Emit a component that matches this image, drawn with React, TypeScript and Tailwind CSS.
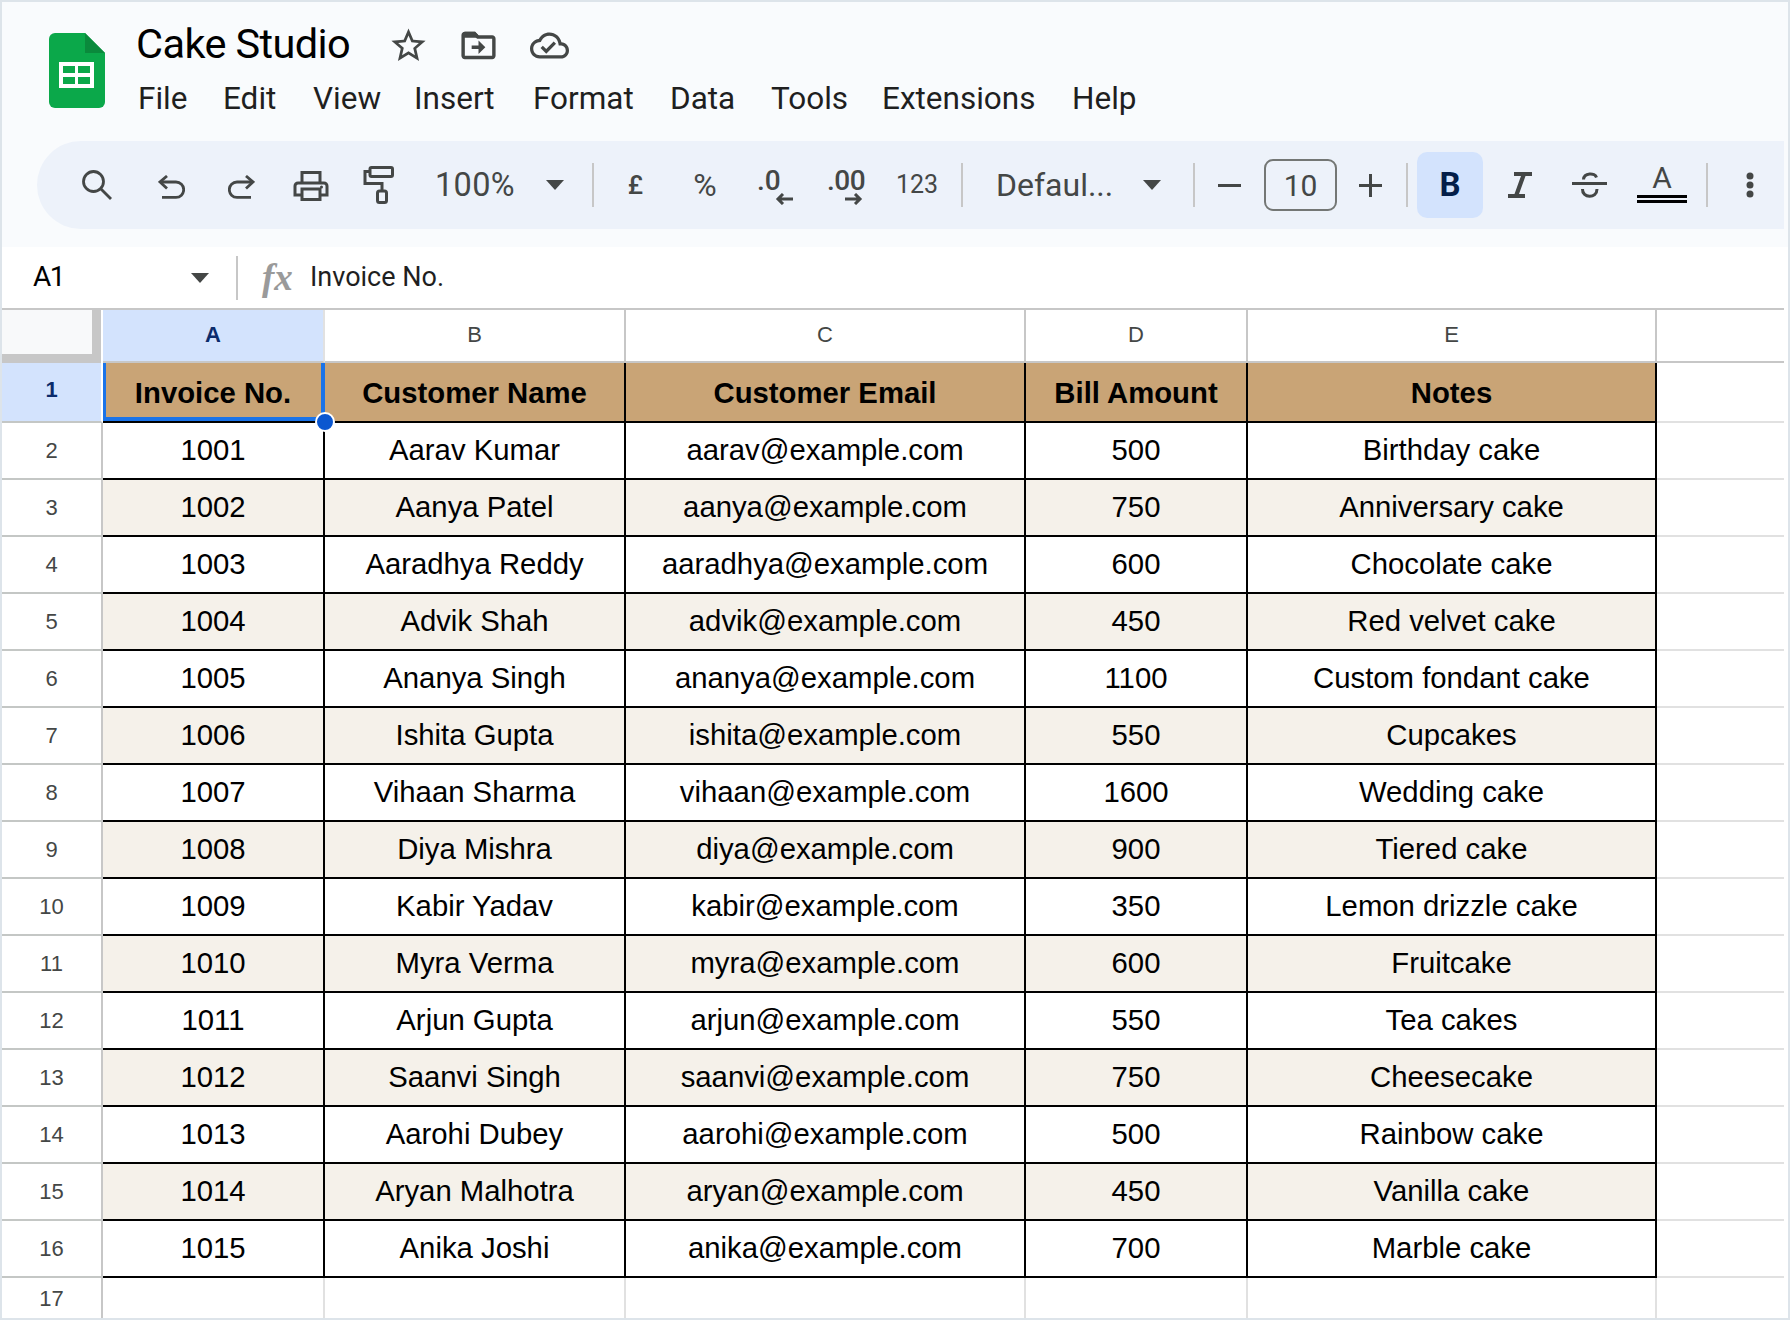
import type { ReactNode } from "react";

const rows = [
  ["1001", "Aarav Kumar", "aarav@example.com", "500", "Birthday cake"],
  ["1002", "Aanya Patel", "aanya@example.com", "750", "Anniversary cake"],
  ["1003", "Aaradhya Reddy", "aaradhya@example.com", "600", "Chocolate cake"],
  ["1004", "Advik Shah", "advik@example.com", "450", "Red velvet cake"],
  ["1005", "Ananya Singh", "ananya@example.com", "1100", "Custom fondant cake"],
  ["1006", "Ishita Gupta", "ishita@example.com", "550", "Cupcakes"],
  ["1007", "Vihaan Sharma", "vihaan@example.com", "1600", "Wedding cake"],
  ["1008", "Diya Mishra", "diya@example.com", "900", "Tiered cake"],
  ["1009", "Kabir Yadav", "kabir@example.com", "350", "Lemon drizzle cake"],
  ["1010", "Myra Verma", "myra@example.com", "600", "Fruitcake"],
  ["1011", "Arjun Gupta", "arjun@example.com", "550", "Tea cakes"],
  ["1012", "Saanvi Singh", "saanvi@example.com", "750", "Cheesecake"],
  ["1013", "Aarohi Dubey", "aarohi@example.com", "500", "Rainbow cake"],
  ["1014", "Aryan Malhotra", "aryan@example.com", "450", "Vanilla cake"],
  ["1015", "Anika Joshi", "anika@example.com", "700", "Marble cake"],
];

const gridCols = "grid grid-cols-[101px_222px_301px_400px_222px_409px_127px]";

function Sep({ className = "" }: { className?: string }) {
  return <div className={`w-[2px] h-[44px] shrink-0 bg-[#c7c7c7] ${className}`} />;
}

function Slot({ className, children }: { className: string; children: ReactNode }) {
  return <div className={`flex items-center justify-center shrink-0 ${className}`}>{children}</div>;
}

function Caret() {
  return (
    <svg width="18" height="10" viewBox="0 0 18 10" className="shrink-0">
      <path d="M0 0h18L9 10z" fill="#444746" />
    </svg>
  );
}

function SmallArrow({ left }: { left?: boolean }) {
  return (
    <svg width="18" height="12" viewBox="0 0 18 12" fill="none" stroke="#444746" strokeWidth="3">
      {left ? <path d="M18 6H3M8 1L3 6l5 5" /> : <path d="M0 6h15M10 1l5 5-5 5" />}
    </svg>
  );
}

function Logo() {
  return (
    <svg width="56" height="75" viewBox="0 0 56 75" className="shrink-0">
      <path d="M6 0h30l20 20v49a6 6 0 0 1-6 6H6a6 6 0 0 1-6-6V6a6 6 0 0 1 6-6z" fill="#0ba84a" />
      <path d="M36 0l20 20H36z" fill="#0a8a3c" />
      <rect x="10" y="29" width="35" height="26" fill="#fff" />
      <rect x="14" y="33" width="12" height="7" fill="#0ba84a" />
      <rect x="29" y="33" width="12" height="7" fill="#0ba84a" />
      <rect x="14" y="44" width="12" height="7" fill="#0ba84a" />
      <rect x="29" y="44" width="12" height="7" fill="#0ba84a" />
    </svg>
  );
}

function HeaderBar() {
  const menu: [string, string][] = [
    ["File", "w-[85px]"],
    ["Edit", "w-[90px]"],
    ["View", "w-[101px]"],
    ["Insert", "w-[119px]"],
    ["Format", "w-[137px]"],
    ["Data", "w-[101px]"],
    ["Tools", "w-[111px]"],
    ["Extensions", "w-[190px]"],
    ["Help", "w-[80px]"],
  ];
  return (
    <div className="flex pl-[47px] pt-[31px] h-[139px] shrink-0">
      <Logo />
      <div className="flex flex-col ml-[32px] mt-[-14px]">
        <div className="flex items-center h-[50px]">
          <span className="text-[41.5px] leading-[50px] text-black w-[248px] ml-[-1px] tracking-[-0.6px]">Cake Studio</span>
          <svg width="41" height="41" viewBox="0 0 24 24" fill="#444746" className="shrink-0 ml-[4px] mt-[2px]">
            <path d="M22 9.24l-7.19-.62L12 2 9.19 8.63 2 9.24l5.46 4.73L5.82 21 12 17.27 18.18 21l-1.63-7.03L22 9.24zM12 15.4l-3.76 2.27 1-4.28-3.32-2.88 4.38-.38L12 6.1l1.71 4.04 4.38.38-3.32 2.88 1 4.28L12 15.4z" />
          </svg>
          <svg width="41" height="41" viewBox="0 0 24 24" fill="#444746" className="shrink-0 ml-[29px] mt-[2px]">
            <path d="M20 6h-8l-2-2H4c-1.1 0-1.99.9-1.99 2L2 18c0 1.1.9 2 2 2h16c1.1 0 2-.9 2-2V8c0-1.1-.9-2-2-2zm0 12H4V6h5.17l2 2H20v10zm-8-4H8v-2h4v-3l4 4-4 4v-3z" />
            <path d="M4 4h6l2 2v1.500H2.500V6A2 2 0 0 1 4 4z" />
          </svg>
          <svg width="39" height="39" viewBox="0 0 24 24" fill="#444746" className="shrink-0 ml-[31px] mt-[2px]">
            <path d="M19.35 10.04C18.67 6.59 15.64 4 12 4 9.11 4 6.6 5.64 5.35 8.04 2.34 8.36 0 10.91 0 14c0 3.31 2.69 6 6 6h13c2.76 0 5-2.24 5-5 0-2.64-2.05-4.78-4.65-4.96zM19 18H6c-2.21 0-4-1.79-4-4 0-2.05 1.53-3.76 3.56-3.97l1.07-.11.5-.95C8.08 7.14 9.94 6 12 6c2.62 0 4.88 1.86 5.39 4.43l.3 1.5 1.53.11c1.56.1 2.78 1.41 2.78 2.96 0 1.65-1.35 3-3 3zm-9-3.82l-2.09-2.09L6.5 13.5 10 17l6.01-6.01-1.41-1.41z" />
          </svg>
        </div>
        <div className="flex mt-[10px] ml-[1px] text-[31.5px] leading-[40px] text-[#1f1f1f]">
          {menu.map(([label, w]) => (
            <span key={label} className={w}>
              {label}
            </span>
          ))}
        </div>
      </div>
    </div>
  );
}

function Toolbar() {
  return (
    <div className="flex items-center ml-[35px] mr-[4px] h-[88px] shrink-0 pl-[25px] bg-[#edf2fa] rounded-l-[44px] text-[#444746]">
      <Slot className="w-[70px]">
        <svg width="30" height="30" viewBox="0 0 30 30" fill="none" stroke="#444746" strokeWidth="2.8">
          <circle cx="11.500" cy="11.500" r="10" />
          <path d="M18.500 18.500L29 29" />
        </svg>
      </Slot>
      <Slot className="w-[79px] pt-[4px]">
        <svg width="27" height="24" viewBox="0 0 27 24" fill="none" stroke="#444746" strokeWidth="2.8">
          <path d="M9 1L2 7l7 6.500" />
          <path d="M2 7h16a7.700 7.700 0 0 1 0 15.400H4" />
        </svg>
      </Slot>
      <Slot className="w-[60px] pt-[4px]">
        <svg width="27" height="24" viewBox="0 0 27 24" fill="none" stroke="#444746" strokeWidth="2.8">
          <path d="M18 1l7 6-7 6.500" />
          <path d="M25 7H9a7.700 7.700 0 0 0 0 15.400h14" />
        </svg>
      </Slot>
      <Slot className="w-[80px] pt-[2px]">
        <svg width="36" height="30" viewBox="0 0 36 30" fill="none" stroke="#444746" strokeWidth="3">
          <path d="M9 11.500V1.500h18v10" />
          <path d="M9 24H2V15a3 3 0 0 1 3-3h26a3 3 0 0 1 3 3v9h-7" />
          <rect x="9" y="18" width="18" height="10.500" />
          <circle cx="28.500" cy="16" r="1.500" fill="#444746" stroke="none" />
        </svg>
      </Slot>
      <Slot className="w-[55px]">
        <svg width="31" height="38" viewBox="0 0 31 38" fill="none" stroke="#444746" strokeWidth="3">
          <rect x="7" y="1.500" width="22.500" height="9" rx="1.500" />
          <path d="M7 5.500H2V17.500H19V25" />
          <rect x="14.500" y="25" width="9" height="11.500" rx="2" />
        </svg>
      </Slot>
      <div className="w-[140px] pl-[29px] shrink-0 text-[32.5px] leading-none tracking-[0.3px]">100%</div>
      <Caret />
      <Sep className="ml-[28px]" />
      <Slot className="w-[83px] text-[26px] font-medium">£</Slot>
      <Slot className="w-[56px] text-[32px] leading-none">%</Slot>
      <Slot className="w-[84px]">
        <div className="flex flex-col w-[36px]">
          <span className="self-start text-[28px] leading-[27px] pt-[2px] font-medium">.0</span>
          <div className="self-end mt-[-1px]">
            <SmallArrow left />
          </div>
        </div>
      </Slot>
      <Slot className="w-[56px]">
        <div className="flex flex-col w-[36px]">
          <span className="self-start text-[28px] leading-[27px] pt-[2px] font-medium tracking-[-0.5px]">.00</span>
          <div className="self-end mt-[-1px]">
            <SmallArrow />
          </div>
        </div>
      </Slot>
      <Slot className="w-[88px] text-[25px]">123</Slot>
      <Sep />
      <div className="w-[180px] pl-[33px] shrink-0 text-[32px] leading-none">Defaul...</div>
      <Caret />
      <Sep className="ml-[32px]" />
      <Slot className="w-[69px]">
        <div className="w-[23px] h-[3px] bg-[#444746]" />
      </Slot>
      <Slot className="w-[73px] h-[52px] border-2 border-[#747775] rounded-[9px] text-[30px]">10</Slot>
      <Slot className="w-[69px] pr-[2px]">
        <svg width="23" height="23" viewBox="0 0 23 23" fill="none" stroke="#444746" strokeWidth="3">
          <path d="M0 11.500h23M11.500 0v23" />
        </svg>
      </Slot>
      <Sep />
      <Slot className="ml-[9px] w-[66px] h-[66px] rounded-[10px] bg-[#d3e3fd] text-[#041e49] text-[33px] font-bold">B</Slot>
      <Slot className="w-[73px]">
        <svg width="24" height="26" viewBox="0 0 24 26" fill="#444746">
          <path d="M6 0h18v4h-6.500L11 22h6v4H0v-4h6.500L13 4H6z" />
        </svg>
      </Slot>
      <Slot className="w-[67px]">
        <svg width="35" height="26" viewBox="0 0 35 26" fill="none" stroke="#444746" strokeWidth="3">
          <path d="M0 11.500h35" />
          <path d="M11.500 7.500C12 0.500 23 0.500 24.500 5.500" />
          <path d="M10.500 17C10 26.500 25 27 25 17" />
        </svg>
      </Slot>
      <div className="w-[78px] shrink-0 flex flex-col items-center">
        <span className="text-[30px] leading-[30px] mt-[-4px]">A</span>
        <div className="w-[50px] h-[8px] mt-[2px] border-y-[3px] border-black" />
      </div>
      <Sep className="ml-[5px]" />
      <Slot className="w-[76px] pl-[8px]">
        <svg width="8" height="26" viewBox="0 0 8 26" fill="#444746">
          <circle cx="4" cy="4" r="3.500" />
          <circle cx="4" cy="13" r="3.500" />
          <circle cx="4" cy="22" r="3.500" />
        </svg>
      </Slot>
    </div>
  );
}

function FormulaBar() {
  return (
    <div className="flex items-center h-[61px] shrink-0 bg-white">
      <span className="w-[189px] pl-[31px] pb-[1px] text-[28px] text-black tracking-[-1.5px]">A1</span>
      <Caret />
      <Sep className="ml-[27px] h-[37px]" />
      <span
        className="ml-[24px] w-[48px] text-[37px] leading-none text-[#9a9a9a] italic font-bold"
        style={{ fontFamily: '"Liberation Serif", serif' }}
      >
        fx
      </span>
      <span className="text-[27px] text-[#1f1f1f]">Invoice No.</span>
    </div>
  );
}

function Grid() {
  return (
    <div className="flex-1 w-[1782px] border-t-2 border-[#c7c7c7] bg-white" style={{ fontFamily: '"Liberation Sans", Arial, sans-serif' }}>
      {/* column letters */}
      <div className={`${gridCols} h-[53px]`}>
        <div className="pr-[2px]">
          <div className="h-full bg-[#f8f9fa] border-r-[9px] border-b-[9px] border-[#c7c7c7]" />
        </div>
        <div className="flex items-center justify-center bg-[#d3e3fd] border-r-2 border-b-2 border-r-[#e1e1e1] border-b-[#c7c7c7] text-[22px] font-bold text-[#0b2b6b] pb-[2px]">
          A
        </div>
        {["B", "C", "D", "E", ""].map((c, i) => (
          <div
            key={c}
            className={`flex items-center justify-center border-b-2 border-[#c7c7c7] text-[22px] text-[#444746] pb-[2px] ${i < 4 ? "border-r-2" : ""}`}
          >
            {c}
          </div>
        ))}
      </div>

      {/* header row */}
      <div className={`${gridCols} h-[60px]`}>
        <div className="flex items-center justify-center bg-[#d3e3fd] border-r-2 border-r-white border-b-2 border-b-[#c4c7c5] text-[22px] font-bold text-[#0b2b6b] pb-[6px]">
          1
        </div>
        <div className="relative flex items-center justify-center bg-[#c9a476] border-r-2 border-b-2 border-black pt-[2px] text-[29.3px] font-bold text-black">
          <div className="absolute left-0 right-[-2px] top-0 bottom-0 border-l-[3px] border-r-[4px] border-b-[4px] border-[#1a73e8]" />
          Invoice No.
          <div className="absolute right-[-12px] bottom-[-11px] w-[20px] h-[20px] z-10 rounded-full bg-[#0b57d0] border-2 border-white" />
        </div>
        {["Customer Name", "Customer Email", "Bill Amount", "Notes"].map((h) => (
          <div
            key={h}
            className="flex items-center justify-center bg-[#c9a476] border-r-2 border-b-2 border-black pt-[2px] text-[29.3px] font-bold text-black"
          >
            {h}
          </div>
        ))}
        <div className="border-b-2 border-[#e1e1e1]" />
      </div>

      {/* data rows */}
      {rows.map((row, i) => (
        <div key={row[0]} className={`${gridCols} h-[57px]`}>
          <div className="flex items-center justify-center border-r-2 border-b-2 border-r-[#c7c7c7] border-b-[#c4c7c5] text-[22px] text-[#444746]">
            {i + 2}
          </div>
          {row.map((text, j) => (
            <div
              key={j}
              className={`flex items-center justify-center border-r-2 border-b-2 border-black pb-[2px] text-[29.3px] text-black ${i % 2 === 1 ? "bg-[#f5f1ea]" : "bg-white"}`}
            >
              {text}
            </div>
          ))}
          <div className="border-b-2 border-[#e1e1e1]" />
        </div>
      ))}

      {/* empty row 17 */}
      <div className={`${gridCols} h-[40px]`}>
        <div className="flex items-center justify-center border-r-2 border-[#c7c7c7] text-[22px] text-[#444746]">17</div>
        <div className="border-r-2 border-[#e1e1e1]" />
        <div className="border-r-2 border-[#e1e1e1]" />
        <div className="border-r-2 border-[#e1e1e1]" />
        <div className="border-r-2 border-[#e1e1e1]" />
        <div className="border-r-2 border-[#e1e1e1]" />
        <div />
      </div>
    </div>
  );
}

export default function App() {
  return (
    <div
      className="flex flex-col w-[1790px] h-[1320px] overflow-hidden border-2 border-[#dde4ea] bg-white"
      style={{ fontFamily: 'Roboto, "Noto Sans", sans-serif' }}
    >
      <div className="flex flex-col h-[245px] shrink-0 bg-[#f9fbfd]">
        <HeaderBar />
        <Toolbar />
      </div>
      <FormulaBar />
      <Grid />
    </div>
  );
}
